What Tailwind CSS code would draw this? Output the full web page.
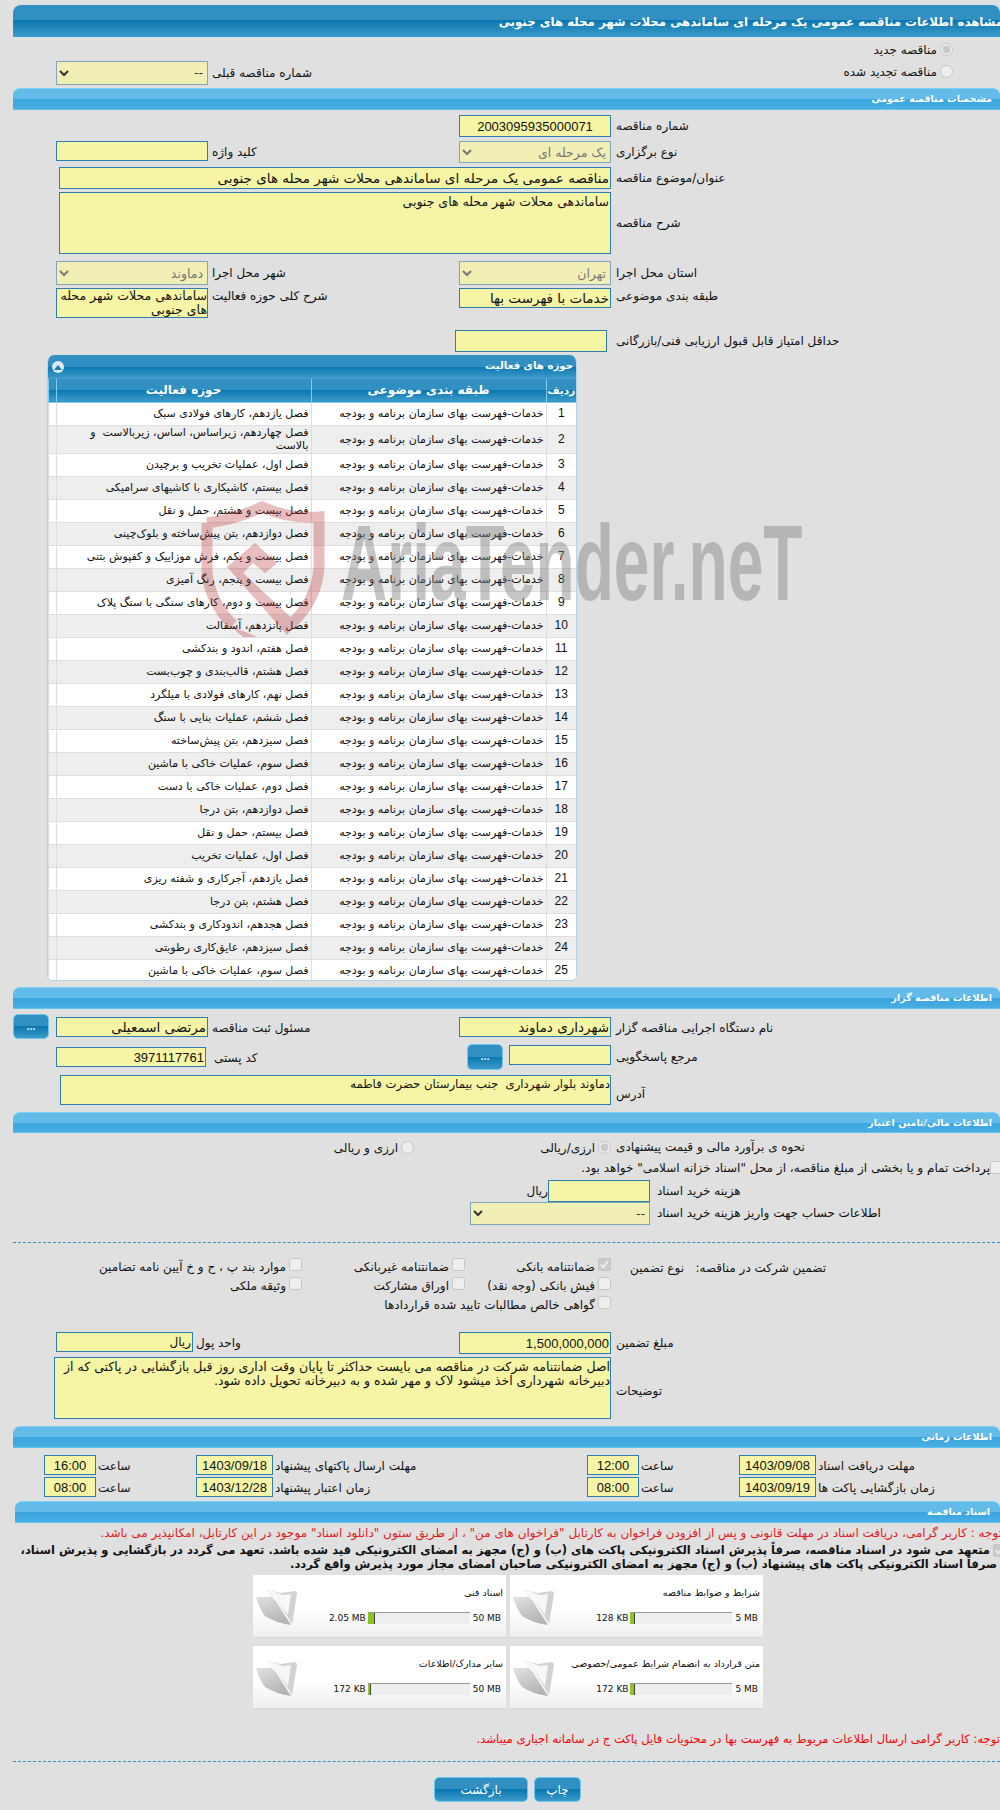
<!DOCTYPE html>
<html lang="fa">
<head>
  <meta charset="UTF-8" />
  <title>مشاهده اطلاعات مناقصه</title>
  <script src="https://cdn.jsdelivr.net/npm/@tailwindcss/browser@4"></script>
</head>
<body class="bg-[#e0e0e0]">
<div class="relative w-[1000px] h-[1810px] overflow-hidden bg-[#e0e0e0] text-[#111] text-[12px] leading-[14px] font-['DejaVu_Sans',sans-serif] [&_input[type=text]]:bg-[#f6f5a5] [&_input[type=text]]:border [&_input[type=text]]:border-[#2a7fae] [&_input[type=text]]:px-[1px] [&_textarea]:bg-[#f6f5a5] [&_textarea]:border [&_textarea]:border-[#2a7fae] [&_textarea]:block [&_textarea]:resize-none [&_select]:bg-[#f1efb4] [&_select]:border [&_select]:border-[#7fa6bd] [&_select]:w-full [&_select]:h-full">

  <!-- عنوان صفحه -->
  <div dir="rtl" class="mt-[5px] ml-[13px] h-[32px] pt-[2px] rounded-t-[8px] border-b border-[#2f9be0] bg-[linear-gradient(#3190c1_0,#3190c1_50%,#0877b2_50%,#3e9ac8_100%)] text-white font-bold text-[11.75px] leading-[30px] whitespace-nowrap overflow-hidden">
    <span class="block mr-[-3px]">مشاهده اطلاعات مناقصه عمومی یک مرحله ای ساماندهی محلات شهر محله های جنوبی</span>
  </div>

  <div dir="rtl" class="mt-[5px] h-[15px] pr-[47px] flex items-center gap-[3px]">
    <input type="radio" disabled checked class="m-0"><span>مناقصه جدید</span>
  </div>
  <div class="mt-[4px] h-[22px] grid grid-cols-[56px_152px_251px_152px_1fr]">
    <div class="col-start-2"><select dir="rtl" class="text-[#333]"><option>--</option></select></div>
    <div dir="rtl" class="text-left pl-[4px] leading-[24px]">شماره مناقصه قبلی</div>
    <div dir="rtl" class="col-start-5 pr-[47px] flex items-start gap-[3px] pt-[4px]"><input type="radio" disabled class="m-0"><span>مناقصه تجدید شده</span></div>
  </div>

  <!-- مشخصات مناقصه عمومی -->
  <div dir="rtl" class="mt-[5px] ml-[13px] h-[22px] pr-[8px] rounded-t-[7px] border-t border-[#7fd0f2] border-b-[#5ec4ee] border-b bg-[linear-gradient(#62bbe9_0,#62bbe9_50%,#38a5e0_50%,#4aaee3_100%)] text-white font-bold text-[9.5px] leading-[20px]">مشخصات مناقصه عمومی</div>

  <div class="mt-[5px] h-[20px] grid grid-cols-[56px_152px_251px_152px_1fr]">
    <input type="text" dir="rtl" value="2003095935000071" class="col-start-4 w-full h-full text-center font-['Liberation_Sans',sans-serif] text-[13px]">
    <div dir="rtl" class="text-left pl-[5px] leading-[22px]">شماره مناقصه</div>
  </div>
  <div class="mt-[6px] h-[21px] grid grid-cols-[56px_152px_251px_152px_1fr]">
    <input type="text" class="col-start-2 w-full h-[20px]">
    <div dir="rtl" class="text-left pl-[4px] leading-[22px]">کلید واژه</div>
    <div><select dir="rtl" class="text-[12.5px] text-[#777]"><option>یک مرحله ای</option></select></div>
    <div dir="rtl" class="text-left pl-[5px] leading-[22px]">نوع برگزاری</div>
  </div>
  <div class="mt-[5px] h-[20px] grid grid-cols-[59px_552px_1fr]">
    <input type="text" dir="rtl" value="مناقصه عمومی یک مرحله ای ساماندهی محلات شهر محله های جنوبی" class="col-start-2 w-full h-full text-[13.5px]">
    <div dir="rtl" class="text-left pl-[5px] leading-[22px]">عنوان/موضوع مناقصه</div>
  </div>
  <div class="mt-[5px] h-[62px] grid grid-cols-[59px_552px_1fr]">
    <textarea dir="rtl" class="col-start-2 w-full h-full text-[12.5px] px-[1px] pt-[2px]">ساماندهی محلات شهر محله های جنوبی</textarea>
    <div dir="rtl" class="text-left pl-[5px] self-center">شرح مناقصه</div>
  </div>
  <div class="mt-[7px] h-[22px] grid grid-cols-[56px_152px_251px_152px_1fr]">
    <div class="col-start-2"><select dir="rtl" class="text-[12.5px] text-[#777]"><option>دماوند</option></select></div>
    <div dir="rtl" class="text-left pl-[4px] leading-[24px]">شهر محل اجرا</div>
    <div><select dir="rtl" class="text-[12.5px] text-[#777]"><option>تهران</option></select></div>
    <div dir="rtl" class="text-left pl-[5px] leading-[24px]">استان محل اجرا</div>
  </div>
  <div class="mt-[5px] h-[30px] grid grid-cols-[56px_152px_251px_152px_1fr]">
    <textarea dir="rtl" class="col-start-2 w-full h-[30px] text-[12.5px] leading-[14px] overflow-hidden">ساماندهی محلات شهر محله های جنوبی</textarea>
    <div dir="rtl" class="text-left pl-[4px] leading-[17px]">شرح کلی حوزه فعالیت</div>
    <input type="text" dir="rtl" value="خدمات با فهرست بها" class="w-full h-[20px] text-[13.5px]">
    <div dir="rtl" class="text-left pl-[5px] leading-[17px]">طبقه بندی موضوعی</div>
  </div>
  <div class="mt-[12px] h-[20px] grid grid-cols-[455px_152px_1fr]">
    <input type="text" class="col-start-2 w-full h-full">
    <div dir="rtl" class="text-left pl-[9px] leading-[22px] whitespace-nowrap">حداقل امتیاز قابل قبول ارزیابی فنی/بازرگانی</div>
  </div>

  <!-- حوزه های فعالیت -->
  <div class="mt-[5px] ml-[47px] w-[530px] h-[626px] rounded-t-[7px] rounded-b-[5px] border-x border-b border-[#b7d2e3] bg-white overflow-hidden">
    <div dir="rtl" class="relative h-[24px] -mx-px pr-[4px] border-b border-[#4f9fd6] bg-[linear-gradient(#3190c1_0,#3190c1_50%,#0877b2_50%,#3e9ac8_100%)] text-white font-bold text-[10.2px] leading-[22px]">حوزه های فعالیت
      <span class="absolute left-[5px] top-[6px] w-[12px] h-[12px] rounded-full bg-[#dfe9f2] flex items-center justify-center"><svg width="8" height="5" viewBox="0 0 8 5"><path d="M4 0 L8 5 H0 Z" fill="#1c7fb4"/></svg></span>
    </div>
    <table dir="rtl" class="w-full table-fixed border-collapse text-[11px] leading-[13px] [&_td]:border-l [&_td]:border-b [&_td]:border-[#dedede] [&_td]:pr-[2px] [&_tbody_tr]:h-[23px] [&_tbody_tr:nth-child(even)]:bg-[#eeeeee] [&_td:first-child]:text-center [&_td:first-child]:pr-0 [&_td:first-child]:font-['Liberation_Sans',sans-serif] [&_td:first-child]:text-[12px] [&_th]:border-l [&_th]:border-[#7fcdf0] [&_th]:font-bold">
      <colgroup><col class="w-[30px]"><col class="w-[235px]"><col class="w-[255px]"><col></colgroup>
      <thead>
        <tr class="h-[23px] text-white text-[12px] border-b border-[#7fd3f3] bg-[linear-gradient(#3190c1_0,#3190c1_50%,#0877b2_50%,#3e9ac8_100%)]"><th class="text-[10.5px]">ردیف</th><th>طبقه بندی موضوعی</th><th>حوزه فعالیت</th><th></th></tr>
      </thead>
      <tbody>
        <tr><td>1</td><td>خدمات-فهرست بهای سازمان برنامه و بودجه</td><td>فصل یازدهم، کارهای فولادی سبک</td><td></td></tr>
        <tr class="!h-[28px]"><td>2</td><td>خدمات-فهرست بهای سازمان برنامه و بودجه</td><td>فصل چهاردهم، زیراساس، اساس، زیربالاست &nbsp;و<br>بالاست</td><td></td></tr>
        <tr><td>3</td><td>خدمات-فهرست بهای سازمان برنامه و بودجه</td><td>فصل اول، عملیات تخریب و برچیدن</td><td></td></tr>
        <tr><td>4</td><td>خدمات-فهرست بهای سازمان برنامه و بودجه</td><td>فصل بیستم، کاشیکاری با کاشیهای سرامیکی</td><td></td></tr>
        <tr><td>5</td><td>خدمات-فهرست بهای سازمان برنامه و بودجه</td><td>فصل بیست و هشتم، حمل و نقل</td><td></td></tr>
        <tr><td>6</td><td>خدمات-فهرست بهای سازمان برنامه و بودجه</td><td>فصل دوازدهم، بتن پیش‌ساخته و بلوک‌چینی</td><td></td></tr>
        <tr><td>7</td><td>خدمات-فهرست بهای سازمان برنامه و بودجه</td><td>فصل بیست و یکم، فرش موزاییک و کفپوش بتنی</td><td></td></tr>
        <tr><td>8</td><td>خدمات-فهرست بهای سازمان برنامه و بودجه</td><td>فصل بیست و پنجم، رنگ آمیزی</td><td></td></tr>
        <tr><td>9</td><td>خدمات-فهرست بهای سازمان برنامه و بودجه</td><td>فصل بیست و دوم، کارهای سنگی با سنگ پلاک</td><td></td></tr>
        <tr><td>10</td><td>خدمات-فهرست بهای سازمان برنامه و بودجه</td><td>فصل پانزدهم، آسفالت</td><td></td></tr>
        <tr><td>11</td><td>خدمات-فهرست بهای سازمان برنامه و بودجه</td><td>فصل هفتم، اندود و بندکشی</td><td></td></tr>
        <tr><td>12</td><td>خدمات-فهرست بهای سازمان برنامه و بودجه</td><td>فصل هشتم، قالب‌بندی و چوب‌بست</td><td></td></tr>
        <tr><td>13</td><td>خدمات-فهرست بهای سازمان برنامه و بودجه</td><td>فصل نهم، کارهای فولادی با میلگرد</td><td></td></tr>
        <tr><td>14</td><td>خدمات-فهرست بهای سازمان برنامه و بودجه</td><td>فصل ششم، عملیات بنایی با سنگ</td><td></td></tr>
        <tr><td>15</td><td>خدمات-فهرست بهای سازمان برنامه و بودجه</td><td>فصل سیزدهم، بتن پیش‌ساخته</td><td></td></tr>
        <tr><td>16</td><td>خدمات-فهرست بهای سازمان برنامه و بودجه</td><td>فصل سوم، عملیات خاکی با ماشین</td><td></td></tr>
        <tr><td>17</td><td>خدمات-فهرست بهای سازمان برنامه و بودجه</td><td>فصل دوم، عملیات خاکی با دست</td><td></td></tr>
        <tr><td>18</td><td>خدمات-فهرست بهای سازمان برنامه و بودجه</td><td>فصل دوازدهم، بتن درجا</td><td></td></tr>
        <tr><td>19</td><td>خدمات-فهرست بهای سازمان برنامه و بودجه</td><td>فصل بیستم، حمل و نقل</td><td></td></tr>
        <tr><td>20</td><td>خدمات-فهرست بهای سازمان برنامه و بودجه</td><td>فصل اول، عملیات تخریب</td><td></td></tr>
        <tr><td>21</td><td>خدمات-فهرست بهای سازمان برنامه و بودجه</td><td>فصل یازدهم، آجرکاری و شفته ریزی</td><td></td></tr>
        <tr><td>22</td><td>خدمات-فهرست بهای سازمان برنامه و بودجه</td><td>فصل هشتم، بتن درجا</td><td></td></tr>
        <tr><td>23</td><td>خدمات-فهرست بهای سازمان برنامه و بودجه</td><td>فصل هجدهم، اندودکاری و بندکشی</td><td></td></tr>
        <tr><td>24</td><td>خدمات-فهرست بهای سازمان برنامه و بودجه</td><td>فصل سیزدهم، عایق‌کاری رطوبتی</td><td></td></tr>
        <tr><td>25</td><td>خدمات-فهرست بهای سازمان برنامه و بودجه</td><td>فصل سوم، عملیات خاکی با ماشین</td><td></td></tr>
      </tbody>
    </table>
  </div>

  <!-- اطلاعات مناقصه گزار -->
  <div dir="rtl" class="mt-[6px] ml-[13px] h-[22px] pr-[8px] rounded-t-[7px] border-t border-[#7fd0f2] border-b-[#5ec4ee] border-b bg-[linear-gradient(#62bbe9_0,#62bbe9_50%,#38a5e0_50%,#4aaee3_100%)] text-white font-bold text-[9.5px] leading-[20px]">اطلاعات مناقصه گزار</div>

  <div class="mt-[5px] h-[25px] grid grid-cols-[56px_152px_251px_152px_1fr]">
    <button class="ml-[13px] w-[36px] h-[25px] rounded-[5px] border border-[#6cc8f0] text-white font-bold text-[8px] leading-[26px] bg-[linear-gradient(#3190c1_0,#3190c1_50%,#0877b2_50%,#3e9ac8_100%)]">...</button>
    <input type="text" dir="rtl" value="مرتضی اسمعیلی" class="mt-[3px] w-full h-[20px] text-[13.5px]">
    <div dir="rtl" class="mt-[3px] text-left pl-[4px] leading-[22px]">مسئول ثبت مناقصه</div>
    <input type="text" dir="rtl" value="شهرداری دماوند" class="mt-[3px] w-full h-[20px] text-[13.5px]">
    <div dir="rtl" class="mt-[3px] text-left pl-[5px] leading-[22px]">نام دستگاه اجرایی مناقصه گزار</div>
  </div>
  <div class="mt-[5px] h-[26px] grid grid-cols-[56px_150px_8px_253px_36px_6px_102px_1fr]">
    <input type="text" dir="rtl" value="3971117761" class="col-start-2 mt-[3px] w-full h-[20px] font-['Liberation_Sans',sans-serif] text-[13px]">
    <div dir="rtl" class="col-start-4 mt-[3px] text-left leading-[22px]">کد پستی</div>
    <button class="w-[36px] h-[26px] rounded-[5px] border border-[#6cc8f0] text-white font-bold text-[8px] leading-[26px] bg-[linear-gradient(#3190c1_0,#3190c1_50%,#0877b2_50%,#3e9ac8_100%)]">...</button>
    <input type="text" class="col-start-7 mt-[1px] w-full h-[20px]">
    <div dir="rtl" class="mt-[2px] text-left pl-[5px] leading-[22px]">مرجع پاسخگویی</div>
  </div>
  <div class="mt-[5px] h-[30px] grid grid-cols-[60px_551px_1fr]">
    <textarea dir="rtl" class="col-start-2 w-full h-full text-[11.7px] pt-[1px]">دماوند بلوار شهرداری &nbsp;جنب بیمارستان حضرت فاطمه</textarea>
    <div dir="rtl" class="text-left pl-[5px] pt-[12px]">آدرس</div>
  </div>

  <!-- اطلاعات مالی -->
  <div dir="rtl" class="mt-[7px] ml-[13px] h-[21px] pr-[8px] rounded-t-[7px] border-t border-[#7fd0f2] border-b-[#5ec4ee] border-b bg-[linear-gradient(#62bbe9_0,#62bbe9_50%,#38a5e0_50%,#4aaee3_100%)] text-white font-bold text-[9.5px] leading-[19px]">اطلاعات مالی/تامین اعتبار</div>

  <div class="mt-[5px] h-[17px] grid grid-cols-[337px_274px_1fr]">
    <div dir="rtl" class="col-start-2 grid grid-cols-[70px_1fr] items-center whitespace-nowrap">
      <div class="flex items-center gap-[3px]"><input type="radio" disabled checked class="m-0"><span>ارزی/ریالی</span></div>
      <div class="flex items-center gap-[3px] pr-[127px]"><input type="radio" disabled class="m-0"><span>ارزی و ریالی</span></div>
    </div>
    <div dir="rtl" class="text-left pl-[5px] leading-[19px]">نحوه ی برآورد مالی و قیمت پیشنهادی</div>
  </div>
  <div dir="rtl" class="mt-[5px] h-[15px] mr-[-3px] flex items-center whitespace-nowrap">
    <input type="checkbox" disabled class="m-0"><span>پرداخت تمام و یا بخشی از مبلغ مناقصه، از محل "اسناد خزانه اسلامی" خواهد بود.</span>
  </div>
  <div class="mt-[5px] h-[20px] grid grid-cols-[528px_20px_102px_1fr]">
    <div dir="rtl" class="col-start-2 leading-[22px] whitespace-nowrap">ریال</div>
    <input type="text" class="w-full h-full">
    <div dir="rtl" class="text-left pl-[7px] leading-[22px]">هزینه خرید اسناد</div>
  </div>
  <div class="mt-[2px] h-[22px] grid grid-cols-[470px_180px_1fr]">
    <div class="col-start-2"><select dir="rtl" class="text-[#333]"><option>--</option></select></div>
    <div dir="rtl" class="text-left pl-[7px] leading-[23px]">اطلاعات حساب جهت واریز هزینه خرید اسناد</div>
  </div>
  <div class="mt-[18px] ml-[13px] border-t border-dashed border-[#2f8fc0]"></div>

  <div dir="rtl" class="mt-[15px] pr-[174px] grid grid-cols-[142px_73px_146px_163px_1fr] grid-rows-[19px_19px_19px] whitespace-nowrap">
    <div class="pt-[3px]">تضمین شرکت در مناقصه:</div>
    <div class="pt-[3px]">نوع تضمین</div>
    <div class="flex items-start gap-[3px]"><input type="checkbox" disabled checked class="m-0"><span class="pt-[2px]">ضمانتنامه بانکی</span></div>
    <div class="flex items-start gap-[3px]"><input type="checkbox" disabled class="m-0"><span class="pt-[2px]">ضمانتنامه غیربانکی</span></div>
    <div class="flex items-start gap-[3px]"><input type="checkbox" disabled class="m-0"><span class="pt-[2px]">موارد بند پ ، ح و خ آیین نامه تضامین</span></div>
    <div class="col-start-3 flex items-start gap-[3px]"><input type="checkbox" disabled class="m-0"><span class="pt-[2px]">فیش بانکی (وجه نقد)</span></div>
    <div class="flex items-start gap-[3px]"><input type="checkbox" disabled class="m-0"><span class="pt-[2px]">اوراق مشارکت</span></div>
    <div class="flex items-start gap-[3px]"><input type="checkbox" disabled class="m-0"><span class="pt-[2px]">وثیقه ملکی</span></div>
    <div class="col-start-3 col-span-3 flex items-start gap-[3px]"><input type="checkbox" disabled class="m-0"><span class="pt-[2px]">گواهی خالص مطالبات تایید شده قراردادها</span></div>
  </div>

  <div class="mt-[17px] h-[20px] grid grid-cols-[56px_403px_152px_1fr]">
    <div class="col-start-2 flex">
      <input type="text" dir="rtl" value="ریال" class="w-[137px] h-[20px] text-[12px]">
      <div dir="rtl" class="ml-[3px] leading-[22px]">واحد پول</div>
    </div>
    <input type="text" dir="rtl" value="1,500,000,000" class="w-full h-full font-['Liberation_Sans',sans-serif] text-[13px]">
    <div dir="rtl" class="text-left pl-[5px] leading-[22px]">مبلغ تضمین</div>
  </div>
  <div class="mt-[5px] h-[62px] grid grid-cols-[54px_557px_1fr]">
    <textarea dir="rtl" class="col-start-2 w-full h-full text-[12.5px] leading-[14px] pt-[2px]">اصل ضمانتنامه شرکت در مناقصه می بایست حداکثر تا پایان وقت اداری روز قبل بازگشایی در پاکتی که از دبیرخانه شهرداری اخذ میشود لاک و مهر شده و به دبیرخانه تحویل داده شود.</textarea>
    <div dir="rtl" class="text-left pl-[5px] self-center pt-[6px]">توضیحات</div>
  </div>

  <!-- اطلاعات زمانی -->
  <div dir="rtl" class="mt-[7px] ml-[13px] h-[22px] pr-[8px] rounded-t-[7px] border-t border-[#7fd0f2] border-b-[#5ec4ee] border-b bg-[linear-gradient(#62bbe9_0,#62bbe9_50%,#38a5e0_50%,#4aaee3_100%)] text-white font-bold text-[9.5px] leading-[20px]">اطلاعات زمانی</div>

  <div class="mt-[7px] grid grid-cols-[44px_52px_100px_77px_314px_52px_100px_77px_1fr] grid-rows-[20px_20px] gap-y-[2px] [&_input]:w-full [&_input]:h-[20px] [&_input]:text-center [&_input]:font-['Liberation_Sans',sans-serif] [&_input]:text-[13px] [&_div]:pl-[2px] [&_div]:leading-[22px]">
    <input type="text" value="16:00" class="col-start-2"><div dir="rtl" class="text-left">ساعت</div>
    <input type="text" value="1403/09/18"><div dir="rtl" class="text-left">مهلت ارسال پاکتهای پیشنهاد</div>
    <input type="text" value="12:00"><div dir="rtl" class="text-left">ساعت</div>
    <input type="text" value="1403/09/08"><div dir="rtl" class="text-left">مهلت دریافت اسناد</div>
    <input type="text" value="08:00" class="col-start-2"><div dir="rtl" class="text-left">ساعت</div>
    <input type="text" value="1403/12/28"><div dir="rtl" class="text-left">زمان اعتبار پیشنهاد</div>
    <input type="text" value="08:00"><div dir="rtl" class="text-left">ساعت</div>
    <input type="text" value="1403/09/19"><div dir="rtl" class="text-left">زمان بازگشایی پاکت ها</div>
  </div>

  <!-- اسناد مناقصه -->
  <div dir="rtl" class="mt-[4px] ml-[15px] h-[22px] pr-[10px] rounded-t-[7px] border-t border-[#7fd0f2] border-b-[#5ec4ee] border-b bg-[linear-gradient(#62bbe9_0,#62bbe9_50%,#38a5e0_50%,#4aaee3_100%)] text-white font-bold text-[9.5px] leading-[20px]">اسناد مناقصه</div>

  <p dir="rtl" class="mt-[3px] h-[14px] mr-[-2px] whitespace-nowrap text-[#e01b1b] text-[12px]">توجه : کاربر گرامی، دریافت اسناد در مهلت قانونی و پس از افزودن فراخوان به کارتابل "فراخوان های من" ، از طریق ستون "دانلود اسناد" موجود در این کارتابل، امکانپذیر می باشد.</p>
  <div dir="rtl" class="mt-[3px] font-bold text-[11.5px] whitespace-nowrap">
    <div class="h-[14px] mr-[-6px] flex items-center gap-[3px]"><input type="checkbox" disabled checked class="m-0"><span>متعهد می شود در اسناد مناقصه، صرفاً پذیرش اسناد الکترونیکی پاکت های (ب) و (ج) مجهز به امضای الکترونیکی قید شده باشد. تعهد می گردد در بازگشایی و پذیرش اسناد،</span></div>
    <div class="h-[14px] pr-[3px]">صرفاً اسناد الکترونیکی پاکت های پیشنهاد (ب) و (ج) مجهز به امضای الکترونیکی صاحبان امضای مجاز مورد پذیرش واقع گردد.</div>
  </div>

  <div class="mt-[4px] ml-[253px] w-[510px] grid grid-cols-[253px_253px] gap-x-[4px] gap-y-[8px]">
    <div class="h-[63px] flex bg-[linear-gradient(#fff_55%,#efefef_100%)] border-b border-[#d6d6d6]">
      <svg class="ml-[3px] mt-[13px] w-[41px] h-[37px] shrink-0" viewBox="0 0 41 37"><defs><linearGradient id="fold" x1="0" y1="0" x2="0.5" y2="1"><stop offset="0" stop-color="#e2e2e2"/><stop offset="1" stop-color="#b4b4b4"/></linearGradient></defs><path d="M11 2 L25 5 L39 3 Q41 4 41 6 L36 36 L20 10 Z" fill="#d2d2d2"/><path d="M13 2 L27 7 L35 6 L32 27 L20 10 L13 8 Z" fill="#f7f7f7"/><path d="M0 9 L16 9 Q20 12 23 18 L35 37 Q20 35 9 28 Q3 20 0 9 Z" fill="url(#fold)"/></svg>
      <div class="flex-1 min-w-0 pr-[3px]">
        <div dir="rtl" class="mt-[11px] h-[14px] whitespace-nowrap text-[9.5px]">اسناد فنی</div>
        <div class="mt-[12px] flex justify-end items-start pr-[2px] text-[9px] whitespace-nowrap"><span class="leading-[12px]">2.05 MB</span><span class="ml-[2px] w-[102px] h-[12px] bg-[#eee] border-t border-[#999] block"><span class="block w-[7px] h-full bg-[#8fc31f] border-r border-[#444]"></span></span><span class="ml-[3px] leading-[12px]">50 MB</span></div>
      </div>
    </div>
    <div class="h-[63px] flex bg-[linear-gradient(#fff_55%,#efefef_100%)] border-b border-[#d6d6d6]">
      <svg class="ml-[3px] mt-[13px] w-[41px] h-[37px] shrink-0" viewBox="0 0 41 37"><path d="M11 2 L25 5 L39 3 Q41 4 41 6 L36 36 L20 10 Z" fill="#d2d2d2"/><path d="M13 2 L27 7 L35 6 L32 27 L20 10 L13 8 Z" fill="#f7f7f7"/><path d="M0 9 L16 9 Q20 12 23 18 L35 37 Q20 35 9 28 Q3 20 0 9 Z" fill="url(#fold)"/></svg>
      <div class="flex-1 min-w-0 pr-[3px]">
        <div dir="rtl" class="mt-[11px] h-[14px] whitespace-nowrap text-[9.5px]">شرایط و ضوابط مناقصه</div>
        <div class="mt-[12px] flex justify-end items-start pr-[2px] text-[9px] whitespace-nowrap"><span class="leading-[12px]">128 KB</span><span class="ml-[2px] w-[102px] h-[12px] bg-[#eee] border-t border-[#999] block"><span class="block w-[5px] h-full bg-[#8fc31f] border-r border-[#444]"></span></span><span class="ml-[3px] leading-[12px]">5 MB</span></div>
      </div>
    </div>
    <div class="h-[63px] flex bg-[linear-gradient(#fff_55%,#efefef_100%)] border-b border-[#d6d6d6]">
      <svg class="ml-[3px] mt-[13px] w-[41px] h-[37px] shrink-0" viewBox="0 0 41 37"><path d="M11 2 L25 5 L39 3 Q41 4 41 6 L36 36 L20 10 Z" fill="#d2d2d2"/><path d="M13 2 L27 7 L35 6 L32 27 L20 10 L13 8 Z" fill="#f7f7f7"/><path d="M0 9 L16 9 Q20 12 23 18 L35 37 Q20 35 9 28 Q3 20 0 9 Z" fill="url(#fold)"/></svg>
      <div class="flex-1 min-w-0 pr-[3px]">
        <div dir="rtl" class="mt-[11px] h-[14px] whitespace-nowrap text-[9.5px]">سایر مدارک/اطلاعات</div>
        <div class="mt-[12px] flex justify-end items-start pr-[2px] text-[9px] whitespace-nowrap"><span class="leading-[12px]">172 KB</span><span class="ml-[2px] w-[102px] h-[12px] bg-[#eee] border-t border-[#999] block"><span class="block w-[3px] h-full bg-[#8fc31f] border-r border-[#444]"></span></span><span class="ml-[3px] leading-[12px]">50 MB</span></div>
      </div>
    </div>
    <div class="h-[63px] flex bg-[linear-gradient(#fff_55%,#efefef_100%)] border-b border-[#d6d6d6]">
      <svg class="ml-[3px] mt-[13px] w-[41px] h-[37px] shrink-0" viewBox="0 0 41 37"><path d="M11 2 L25 5 L39 3 Q41 4 41 6 L36 36 L20 10 Z" fill="#d2d2d2"/><path d="M13 2 L27 7 L35 6 L32 27 L20 10 L13 8 Z" fill="#f7f7f7"/><path d="M0 9 L16 9 Q20 12 23 18 L35 37 Q20 35 9 28 Q3 20 0 9 Z" fill="url(#fold)"/></svg>
      <div class="flex-1 min-w-0 pr-[3px]">
        <div dir="rtl" class="mt-[11px] h-[14px] whitespace-nowrap text-[9.5px]">متن قرارداد به انضمام شرایط عمومی/خصوصی</div>
        <div class="mt-[12px] flex justify-end items-start pr-[2px] text-[9px] whitespace-nowrap"><span class="leading-[12px]">172 KB</span><span class="ml-[2px] w-[102px] h-[12px] bg-[#eee] border-t border-[#999] block"><span class="block w-[5px] h-full bg-[#8fc31f] border-r border-[#444]"></span></span><span class="ml-[3px] leading-[12px]">5 MB</span></div>
      </div>
    </div>
  </div>

  <p dir="rtl" class="mt-[23px] h-[14px] whitespace-nowrap text-[#f00] text-[11.6px]">توجه: کاربر گرامی ارسال اطلاعات مربوط به فهرست بها در محتویات فایل پاکت ج در سامانه اجباری میباشد.</p>
  <div class="mt-[15px] ml-[13px] border-t border-dashed border-[#2f8fc0]"></div>

  <div class="mt-[15px] ml-[434px] flex gap-[6px]">
    <button dir="rtl" class="w-[94px] h-[25px] rounded-[5px] border border-[#6cc8f0] text-white text-[12px] bg-[linear-gradient(#3190c1_0,#3190c1_50%,#0877b2_50%,#3e9ac8_100%)]">بازگشت</button>
    <button dir="rtl" class="w-[47px] h-[25px] rounded-[5px] border border-[#6cc8f0] text-white text-[12px] bg-[linear-gradient(#3190c1_0,#3190c1_50%,#0877b2_50%,#3e9ac8_100%)]">چاپ</button>
  </div>

  <!-- واترمارک -->
  <svg class="absolute left-[201px] top-[501px] w-[124px] h-[137px] pointer-events-none opacity-30" viewBox="0 0 124 137" fill="none">
    <path d="M6 22 Q36 18 61 6 Q88 18 118 16 V66 Q116 100 88 125" stroke="#b8282c" stroke-width="11"/>
    <path d="M6 22 V70 Q8 100 32 124" stroke="#b8282c" stroke-width="11"/>
    <path d="M26 66 L54 42 L76 62 L64 72 L52 62 L42 72 L96 122 L86 134 Z" fill="#b8282c"/>
    <path d="M28 124 L56 136 H42 Z" fill="#b8282c"/>
  </svg>
  <div class="absolute left-[341px] top-[500px] origin-left scale-x-[0.593] whitespace-nowrap pointer-events-none font-['Liberation_Sans',sans-serif] font-bold text-[108px] leading-[125px] text-[#808080]/45">AriaTender.neT</div>
</div>
</body>
</html>
